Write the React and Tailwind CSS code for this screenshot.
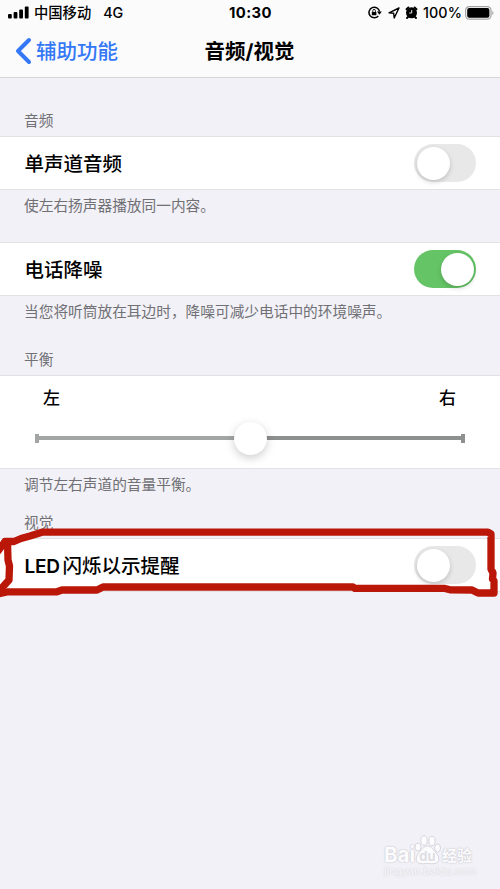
import clsx from "clsx";

function Switch({ on = false }) {
    return (
        <div
            role="switch"
            aria-checked={on}
            className={clsx(
                "flex h-[38px] w-[62px] items-center rounded-full px-[2.5px]",
                on ? "justify-end bg-[#65c466]" : "justify-start bg-[#e8e8e8]"
            )}
        >
            <div className="size-[33px] rounded-full bg-white shadow-[0_2px_5px_rgba(0,0,0,0.18)]" />
        </div>
    );
}

function SettingRow({ children, on, className }) {
    return (
        <div
            className={clsx(
                "flex items-center justify-between border-y border-[#e2e2e5] bg-white pr-6 pl-[24.5px] text-[19.5px] font-medium",
                className
            )}
        >
            <span className="pt-1">{children}</span>
            <Switch on={on} />
        </div>
    );
}

function Note({ children, className }) {
    return (
        <p className={clsx("pl-6 text-[14.7px] leading-[20px] text-[#707075]", className)}>
            {children}
        </p>
    );
}

function StatusBar() {
    return (
        <div className="grid h-[25px] grid-cols-3 items-center pr-[6px] pl-2 text-[14.3px] font-medium">
            <div className="flex items-center">
                <svg width="21" height="13" viewBox="0 0 21 13">
                    <rect x="0" y="8" width="3.8" height="4.5" rx="1" />
                    <rect x="5.6" y="6" width="3.8" height="6.5" rx="1" />
                    <rect x="11.2" y="3.5" width="3.8" height="9" rx="1" />
                    <rect x="16.8" y="0.5" width="3.8" height="12" rx="1" />
                </svg>
                <span className="ml-[5px]">中国移动</span>
                <span className="ml-[12px]">4G</span>
            </div>
            <span className="-ml-[1px] pt-[2px] text-center text-[14.8px] font-bold tracking-[0.4px]">10:30</span>
            <div className="flex items-center justify-end">
                {/* rotation lock */}
                <svg width="14" height="13" viewBox="0 0 14 13" fill="none" stroke="black">
                    <path d="M10.3 10A5.3 5.3 0 1 1 11.5 5.6" strokeWidth="1.5" />
                    <path d="M8.9 5.5h4.9l-2.4 3.3z" fill="black" stroke="none" />
                    <rect x="3.8" y="5.9" width="4.6" height="3.4" rx=".5" fill="black" stroke="none" />
                    <path d="M4.8 6V4.7a1.3 1.3 0 0 1 2.6 0V6" strokeWidth=".9" />
                </svg>
                {/* location */}
                <svg className="ml-[6px]" width="12" height="12" viewBox="0 0 12 12" fill="none" stroke="black" strokeWidth="1.4" strokeLinejoin="round">
                    <path d="M11 1 1 5.8l4.7.5.5 4.7z" />
                </svg>
                {/* alarm */}
                <svg className="ml-[5px]" width="13" height="13" viewBox="0 0 13 13">
                    <circle cx="6.5" cy="6.8" r="5.5" />
                    <path d="M1.5 3.2 3.4 1.5M9.6 1.5l1.9 1.7M3 11l-1 1M10 11l1 1" stroke="black" strokeWidth="1.9" strokeLinecap="round" />
                    <path d="M6.7 4v3H4.2" fill="none" stroke="white" strokeWidth=".9" />
                </svg>
                <span className="ml-[5px] tracking-[0.1px]">100%</span>
                <svg className="ml-[3px]" width="29" height="14" viewBox="0 0 29 14">
                    <rect x=".6" y=".6" width="25.4" height="12.6" rx="3.6" fill="none" stroke="#a3a3a5" strokeWidth="1.2" />
                    <rect x="2.2" y="2.1" width="22.2" height="9.6" rx="2" />
                    <path d="M27.3 4.8v4.4c1.6-.7 1.6-3.7 0-4.4z" fill="#a3a3a5" />
                </svg>
            </div>
        </div>
    );
}

function NavBar() {
    return (
        <div className="grid h-[52px] grid-cols-3 items-center pl-[15px]">
            <div className="flex items-center text-[20.5px] text-[#3478f6]">
                <svg width="17" height="28" viewBox="0 0 17 28" fill="none" stroke="currentColor" strokeWidth="4" strokeLinecap="round" strokeLinejoin="round">
                    <path d="M14 3 3 14l11 11" />
                </svg>
                <span className="ml-1 pt-[2px] font-medium">辅助功能</span>
            </div>
            <h1 className="-ml-[16px] pt-[2px] text-center text-[20.5px] font-bold">音频/视觉</h1>
        </div>
    );
}

function BalanceSlider() {
    return (
        <div className="h-[94px] border-y border-[#e2e2e5] bg-white pt-[10px]">
            <div className="flex justify-between pr-[44px] pl-[43px] text-[17px] leading-6 font-medium">
                <span>左</span>
                <span>右</span>
            </div>
            <div className="mx-[35px] mt-[11px] flex h-[34px] items-center justify-center">
                <div className="h-[9px] w-1 bg-[#a3a5a4]" />
                <div className="h-1 flex-1 bg-[#a3a5a4]" />
                <div className="z-10 -mx-px size-[33px] rounded-full bg-white shadow-[0_3px_10px_rgba(0,0,0,0.2)]" />
                <div className="h-1 flex-1 bg-[#8e908f]" />
                <div className="h-[9px] w-1 bg-[#8e908f]" />
            </div>
        </div>
    );
}

function Watermark() {
    return (
        <div className="absolute top-[834px] left-[384px] w-[92px] text-[#fcfcfe] [text-shadow:0_0_1px_#c4c4ca,0_0_2px_#c4c4ca]">
            <div className="flex h-[31px] items-end">
                <span className="text-[20.5px] leading-[20px] font-bold">Bai</span>
                <svg className="-ml-px" width="27" height="31" viewBox="0 0 27 31" fill="#fcfcfe" stroke="#d3d3d9" strokeWidth=".9">
                    <ellipse cx="4" cy="13" rx="3" ry="4" />
                    <ellipse cx="10" cy="6.5" rx="3.2" ry="4.7" />
                    <ellipse cx="18" cy="7" rx="3.2" ry="4.7" />
                    <ellipse cx="23.5" cy="14" rx="3" ry="4" />
                    <path d="M13.500 12c4 0 6 4 9 7.500s3.500 9-1.500 10c-3 .5-4.500 0-7.500 0s-4.500.5-7.500 0c-5-1-4.500-6.500-1.500-10s5-7.500 9-7.500z" />
                    <text x="13.500" y="27" textAnchor="middle" fontSize="13" fontWeight="bold" fill="#dedee3" stroke="none" className="[text-shadow:none]">du</text>
                </svg>
                <span className="ml-px text-[15px] leading-[19px] font-bold">经验</span>
            </div>
            <div className="mt-px text-[10.5px] leading-[12px] tracking-[0.1px] opacity-60">jingyan.baidu.com</div>
        </div>
    );
}

function MarkerOutline() {
    return (
        <svg
            className="absolute top-[520px] left-0"
            width="500"
            height="85"
            viewBox="0 520 500 85"
            fill="none"
            stroke="#bb1708"
            strokeWidth="7.3"
            strokeLinecap="round"
            strokeLinejoin="round"
        >
            <path d="M-2 551 5 541.5H14L21 538.5 30 536 42 532.2H488L491 534V569L493 573 492.5 579 494 581V593H478L472 590 450 589.8 445 588.4H355L353 587H103L97 590H62L57 591.8H8L-2 594" />
            <path d="M7.5 542 8 560 9.500 566 9 580-1 591" />
        </svg>
    );
}

export default function App() {
    return (
        <div className="relative h-[889px] w-[500px] overflow-hidden bg-[#f2f1f7] font-[Inter,'Noto_Sans_CJK_SC',sans-serif] whitespace-nowrap text-black">
            <header className="h-[78px] border-b border-[#d6d6d9] bg-[#fbfbfc]">
                <StatusBar />
                <NavBar />
            </header>
            <main>
                <Note className="pt-[33px] pb-[5px]">音频</Note>
                <SettingRow className="h-[54px]">单声道音频</SettingRow>
                <Note className="h-[52px] pt-[6px]">使左右扬声器播放同一内容。</Note>
                <SettingRow on className="h-[54px]">电话降噪</SettingRow>
                <Note className="pt-[6px]">当您将听筒放在耳边时，降噪可减少电话中的环境噪声。</Note>
                <Note className="pt-[28px] pb-[5px]">平衡</Note>
                <BalanceSlider />
                <Note className="pt-[6px]">调节左右声道的音量平衡。</Note>
                <Note className="pt-[18px] pb-[5px]">视觉</Note>
                <SettingRow className="h-[54px]">
                    <span className="mr-[3px] font-[Inter] text-[19px] font-semibold tracking-[-0.3px]">LED</span>闪烁以示提醒
                </SettingRow>
            </main>
            <MarkerOutline />
            <Watermark />
        </div>
    );
}
